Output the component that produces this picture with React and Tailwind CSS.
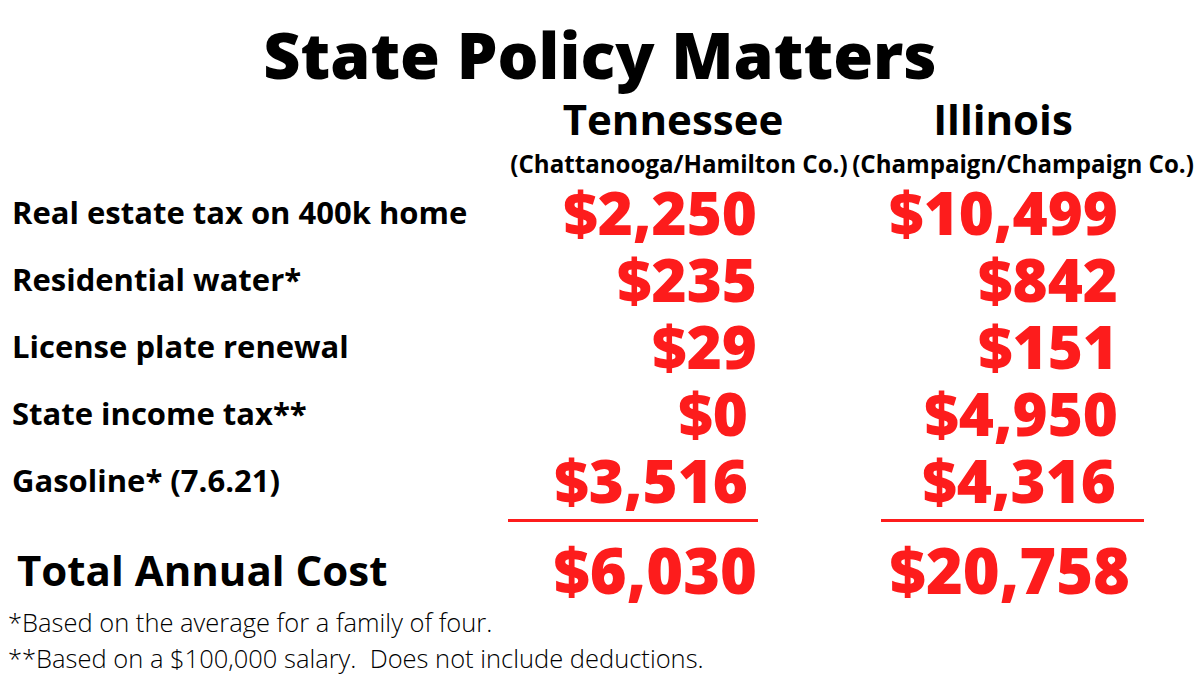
import React from "react";

const rows = [
  { label: "Real estate tax on 400k home", tn: "$2,250", il: "$10,499", tnCls: "pr-0", ilCls: "pr-0" },
  { label: "Residential water*", tn: "$235", il: "$842", tnCls: "pr-0", ilCls: "pr-0" },
  { label: "License plate renewal", tn: "$29", il: "$151", tnCls: "pr-0", ilCls: "pr-0" },
  { label: "State income tax**", tn: "$0", il: "$4,950", tnCls: "pr-[9px]", ilCls: "pr-0" },
  { label: "Gasoline* (7.6.21)", tn: "$3,516", il: "$4,316", tnCls: "pr-[9px]", ilCls: "pr-[2px]" },
];

export default function App() {
  return (
    <div
      className="w-[1200px] h-[676px] bg-white overflow-hidden text-black"
      style={{ fontFamily: '"Open Sans", "Liberation Sans", sans-serif' }}
    >
      <div className="pt-[21px] h-[87px] text-center text-[64.5px] leading-[66px] font-extrabold whitespace-nowrap">
        State Policy Matters
      </div>
      <div className="mt-[11px] flex h-[42px] text-[42px] leading-[42px] font-bold whitespace-nowrap">
        <div className="w-[500px] shrink-0" />
        <div className="w-[346px] shrink-0 text-center">Tennessee</div>
        <div className="w-[314px] shrink-0 text-center">Illinois</div>
      </div>
      <div className="mt-[11px] flex h-[26px] text-[24.1px] leading-[26px] font-bold whitespace-nowrap">
        <div className="w-[504px] shrink-0" />
        <div className="w-[350px] shrink-0 flex justify-center">(Chattanooga/Hamilton Co.)</div>
        <div className="w-[332px] shrink-0 flex justify-center pl-[6px]">(Champaign/Champaign Co.)</div>
      </div>
      <div className="mt-[2px] flex flex-col">
        {rows.map((r) => (
          <div key={r.label} className="flex h-[67px] items-center whitespace-nowrap">
            <div className="w-[500px] shrink-0 pl-[12px] text-[31px] leading-[67px] font-bold">{r.label}</div>
            <div className={`w-[257px] shrink-0 text-right text-[60px] leading-[67px] font-extrabold text-[#fd1c1c] ${r.tnCls}`}>
              {r.tn}
            </div>
            <div className={`w-[361px] shrink-0 text-right text-[60px] leading-[67px] font-extrabold text-[#fd1c1c] ${r.ilCls}`}>
              {r.il}
            </div>
          </div>
        ))}
      </div>
      <div className="mt-[5px] flex h-[3px]">
        <div className="w-[508px] shrink-0" />
        <div className="w-[250px] shrink-0 bg-[#fd1c1c]" />
        <div className="w-[123px] shrink-0" />
        <div className="w-[263px] shrink-0 bg-[#fd1c1c]" />
      </div>
      <div className="mt-[14px] flex h-[67px] items-center whitespace-nowrap">
        <div className="w-[500px] shrink-0 pl-[17px] text-[42px] leading-[67px] font-bold">Total Annual Cost</div>
        <div className="w-[257px] shrink-0 text-right text-[63px] leading-[67px] font-extrabold text-[#fd1c1c]">$6,030</div>
        <div className="w-[373px] shrink-0 text-right text-[63px] leading-[67px] font-extrabold text-[#fd1c1c]">$20,758</div>
      </div>
      <div className="pt-[1px] pl-[8px] text-[25.5px] leading-[36px] font-light whitespace-nowrap">
        *Based on the average for a family of four.
      </div>
      <div className="pl-[8px] text-[25.5px] leading-[36px] font-light whitespace-nowrap">
        **Based on a $100,000 salary.&nbsp; Does not include deductions.
      </div>
    </div>
  );
}
